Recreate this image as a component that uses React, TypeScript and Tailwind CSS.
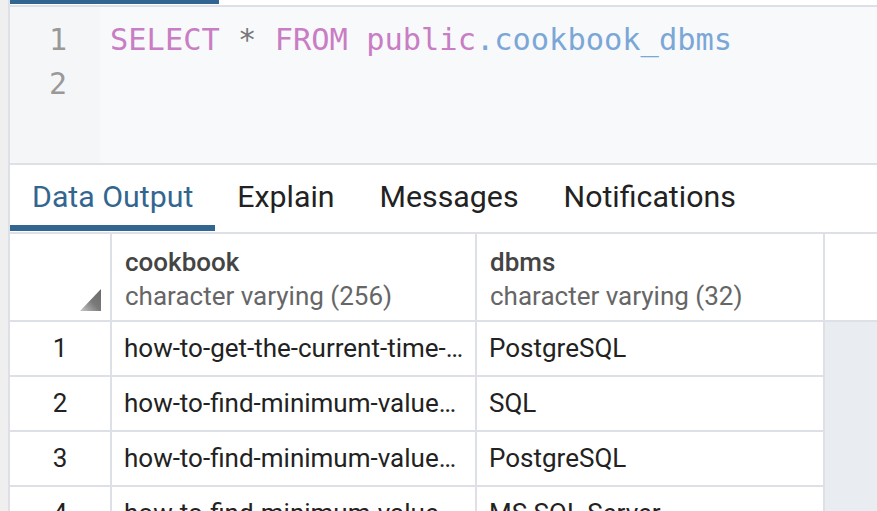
import React from "react";

const rows = [
  { n: 1, c: "how-to-get-the-current-time-…", d: "PostgreSQL" },
  { n: 2, c: "how-to-find-minimum-value…", d: "SQL" },
  { n: 3, c: "how-to-find-minimum-value…", d: "PostgreSQL" },
  { n: 4, c: "how-to-find-minimum-value…", d: "MS SQL Server" },
];

const mono = { fontFamily: '"DejaVu Sans Mono", monospace' };

export default function App() {
  return (
    <div
      className="flex h-[511px] w-[877px] overflow-hidden bg-white"
      style={{ fontFamily: "Roboto, sans-serif" }}
    >
      <div className="w-[8px] shrink-0 bg-[#efefef]" />
      <div className="w-[2px] shrink-0 bg-[#dde0e6]" />
      <div className="flex min-w-0 flex-1 flex-col">
        {/* top strip */}
        <div className="h-[5px] shrink-0 bg-white">
          <div className="h-[4px] w-[209px] bg-[#326690]" />
        </div>
        <div className="h-[2px] shrink-0 bg-[#dde0e6]" />
        {/* editor */}
        <div className="flex h-[156px] shrink-0 bg-[#f8f9fb]">
          <div
            className="w-[90px] shrink-0 bg-[#f5f6f8] pt-[11px] pr-[33px] text-right text-[30px] leading-[44px] text-[#999]"
            style={mono}
          >
            <div>1</div>
            <div>2</div>
          </div>
          <div className="pl-[10px] pt-[11px] text-[30.4px] leading-[44px] whitespace-pre" style={mono}>
            <span className="text-[#c87dc4]">SELECT</span>
            <span className="text-[#777]"> * </span>
            <span className="text-[#c87dc4]">FROM</span>
            <span className="text-[#c87dc4]"> public</span>
            <span className="text-[#7ba7d7]">.cookbook_dbms</span>
          </div>
        </div>
        <div className="h-[2px] shrink-0 bg-[#dde0e6]" />
        {/* tabs */}
        <div className="flex h-[66px] shrink-0 items-stretch">
          <div className="flex flex-col">
            <div className="flex h-[60px] items-center px-[22px] pt-[4px] text-[30.3px] text-[#326690]">Data Output</div>
            <div className="h-[6px] bg-[#326690]" />
          </div>
          <div className="flex h-[60px] items-center px-[22px] pt-[4px] text-[30.3px] text-[#222]">Explain</div>
          <div className="flex h-[60px] items-center px-[23px] pt-[4px] text-[30.3px] text-[#222]">Messages</div>
          <div className="flex h-[60px] items-center px-[22px] pt-[4px] text-[30.3px] text-[#222]">Notifications</div>
        </div>
        <div className="h-[1px] shrink-0 bg-white" />
        <div className="h-[2px] shrink-0 bg-[#dde0e6]" />
        {/* grid header */}
        <div className="flex h-[86px] shrink-0">
          <div className="relative w-[100px] shrink-0">
            <svg className="absolute left-[70px] top-[55px]" width="21" height="22" viewBox="0 0 21 22">
              <defs>
                <linearGradient id="tri" x1="0" y1="1" x2="1" y2="0">
                  <stop offset="0" stopColor="#c8c8c8" />
                  <stop offset="0.5" stopColor="#7a7a7a" />
                  <stop offset="1" stopColor="#6a6a6a" />
                </linearGradient>
              </defs>
              <polygon points="21,0 21,22 0,22" fill="url(#tri)" />
            </svg>
          </div>
          <div className="w-[2px] shrink-0 bg-[#dde0e6]" />
          <div className="flex w-[363px] shrink-0 flex-col justify-center px-[13px] pt-[4px] leading-[34px]">
            <div className="text-[26px] font-medium text-[#444]">cookbook</div>
            <div className="text-[26px] text-[#666]">character varying (256)</div>
          </div>
          <div className="w-[2px] shrink-0 bg-[#dde0e6]" />
          <div className="flex w-[346px] shrink-0 flex-col justify-center px-[13px] pt-[4px] leading-[34px]">
            <div className="text-[26px] font-medium text-[#444]">dbms</div>
            <div className="text-[26px] text-[#666]">character varying (32)</div>
          </div>
          <div className="w-[2px] shrink-0 bg-[#dde0e6]" />
          <div className="flex-1" />
        </div>
        <div className="h-[2px] shrink-0 bg-[#dde0e6]" />
        {/* body */}
        {rows.map((r) => (
          <div key={r.n} className="flex shrink-0 flex-col">
            <div className="flex h-[53px]">
              <div className="flex w-[100px] shrink-0 items-center justify-center text-[26px] text-[#222]">
                {r.n}
              </div>
              <div className="w-[2px] shrink-0 bg-[#dde0e6]" />
              <div className="flex w-[363px] shrink-0 items-center pl-[12px] pr-[12px] text-[26px] text-[#222] whitespace-nowrap">
                {r.c}
              </div>
              <div className="w-[2px] shrink-0 bg-[#dde0e6]" />
              <div className="flex w-[346px] shrink-0 items-center px-[12px] text-[26px] text-[#222] whitespace-nowrap">
                {r.d}
              </div>
              <div className="w-[2px] shrink-0 bg-[#dde0e6]" />
              <div className="flex-1 bg-[#e9ecf1]" />
            </div>
            <div className="flex h-[2px]">
              <div className="w-[813px] shrink-0 bg-[#dde0e6]" />
              <div className="w-[2px] shrink-0 bg-[#dde0e6]" />
              <div className="flex-1 bg-[#e9ecf1]" />
            </div>
          </div>
        ))}
      </div>
    </div>
  );
}
